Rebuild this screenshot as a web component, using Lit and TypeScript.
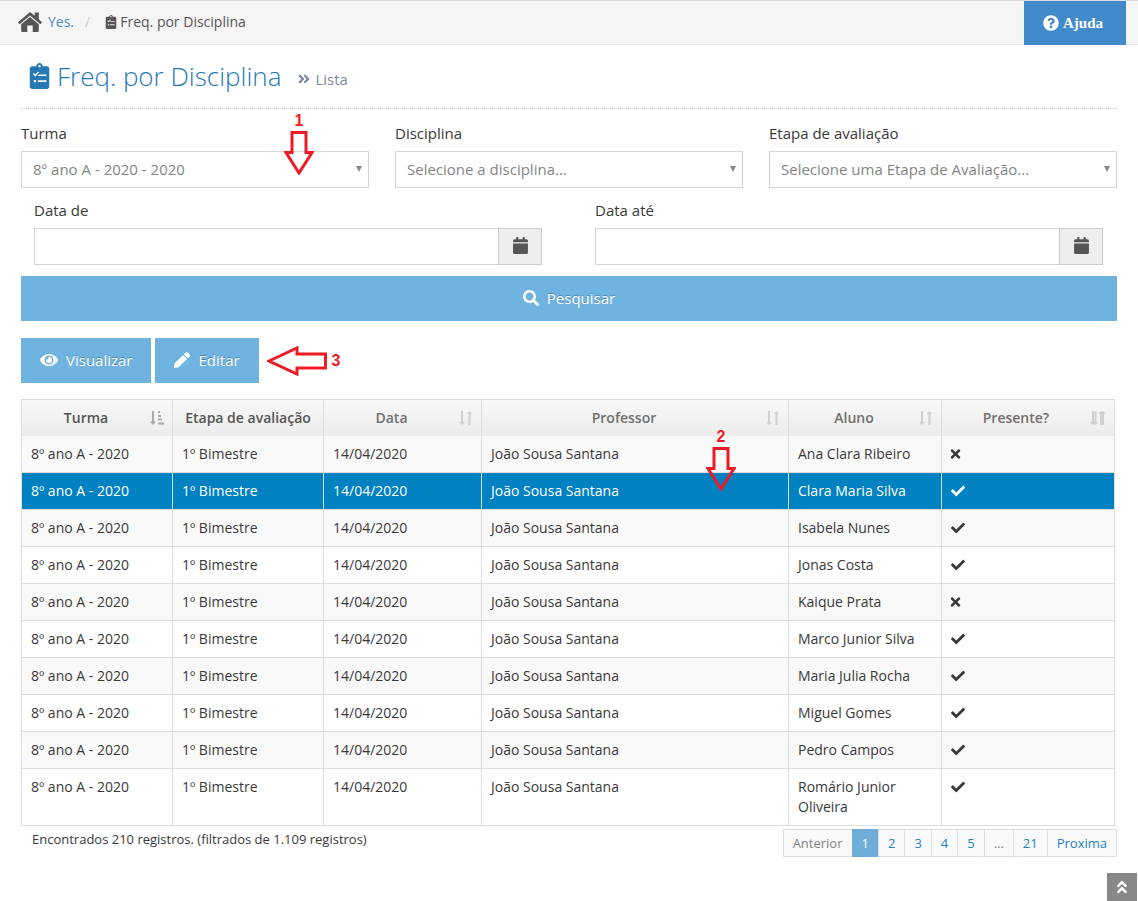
import { LitElement, html, svg, css } from "lit";
import { customElement, property, state } from "lit/decorators.js";
import { classMap } from "lit/directives/class-map.js";

type Glyph = { box: string; art: unknown };

const angles = svg`<path d="M224.3 273l-136 136c-9.4 9.4-24.6 9.4-33.9 0l-22.6-22.6c-9.4-9.4-9.4-24.6 0-33.9l96.4-96.4-96.4-96.4c-9.4-9.4-9.4-24.6 0-33.9L54.3 103c9.4-9.4 24.6-9.4 33.9 0l136 136c9.5 9.4 9.5 24.6.1 34zm192-34l-136-136c-9.4-9.4-24.6-9.4-33.9 0l-22.6 22.6c-9.4 9.4-9.4 24.6 0 33.9l96.4 96.4-96.4 96.4c-9.4 9.4-9.4 24.6 0 33.9l22.6 22.6c9.4 9.4 24.6 9.4 33.9 0l136-136c9.4-9.2 9.4-24.4 0-33.8z"/>`;

const glyphs: Record<string, Glyph> = {
  home: {
    box: "0 0 24 20",
    art: svg`<path d="M12 0 L16.6 3.800 V0.500 H20.800 V7.300 L24 10.300 L22.400 12.200 L12 3.600 L1.600 12.200 L0 10.300 Z"/><path d="M12 5 L20.800 12.300 V19 A1 1 0 0 1 19.800 20 H14.700 V13.500 H9.300 V20 H4.200 A1 1 0 0 1 3.200 19 V12.300 Z"/>`,
  },
  clipboard: {
    box: "0 0 384 512",
    art: svg`<path fill-rule="evenodd" d="M336 64h-80c0-35.300-28.700-64-64-64s-64 28.700-64 64H48C21.500 64 0 85.500 0 112v352c0 26.500 21.500 48 48 48h288c26.500 0 48-21.500 48-48V112c0-26.500-21.500-48-48-48zM192 40c13.300 0 24 10.700 24 24s-10.700 24-24 24-24-10.700-24-24 10.700-24 24-24zM60 218l22-22 26 26 56-56 20 22-76 76zM186 224h142v32H158zM80 336h44v44H80zM160 342h168v34H160z"/>`,
  },
  help: {
    box: "0 0 512 512",
    art: svg`<path d="M504 256c0 136.997-111.043 248-248 248S8 392.997 8 256C8 119.083 119.043 8 256 8s248 111.083 248 248zM262.655 90c-54.497 0-89.255 22.957-116.549 63.758-3.536 5.286-2.353 12.415 2.715 16.258l34.699 26.310c5.205 3.947 12.621 3.008 16.665-2.122 17.864-22.658 30.113-35.797 57.303-35.797 20.429 0 45.698 13.148 45.698 32.958 0 14.976-12.363 22.667-32.534 33.976C247.128 238.528 216 254.941 216 296v4c0 6.627 5.373 12 12 12h56c6.627 0 12-5.373 12-12v-1.333c0-28.462 83.186-29.647 83.186-106.667 0-58.002-60.165-102-116.531-102zM256 338c-25.365 0-46 20.635-46 46 0 25.364 20.635 46 46 46s46-20.636 46-46c0-25.365-20.635-46-46-46z"/>`,
  },
  right: { box: "0 0 448 512", art: angles },
  up: { box: "0 0 512 512", art: svg`<g transform="rotate(-90 256 256) translate(32 0)">${angles}</g>` },
  calendar: {
    box: "0 0 448 512",
    art: svg`<path d="M12 192h424c6.600 0 12 5.400 12 12v260c0 26.500-21.500 48-48 48H48c-26.500 0-48-21.500-48-48V204c0-6.600 5.400-12 12-12zm436-44v-36c0-26.500-21.500-48-48-48h-48V12c0-6.600-5.400-12-12-12h-40c-6.600 0-12 5.400-12 12v52H160V12c0-6.600-5.400-12-12-12h-40c-6.600 0-12 5.400-12 12v52H48C21.500 64 0 85.500 0 112v36c0 6.600 5.400 12 12 12h424c6.600 0 12-5.400 12-12z"/>`,
  },
  search: {
    box: "0 0 512 512",
    art: svg`<path d="M505 442.700L405.300 343c-4.500-4.500-10.600-7-17-7H372c27.600-35.300 44-79.700 44-128C416 93.100 322.900 0 208 0S0 93.100 0 208s93.100 208 208 208c48.300 0 92.700-16.400 128-44v16.300c0 6.400 2.500 12.500 7 17l99.700 99.700c9.400 9.400 24.600 9.400 33.900 0l28.300-28.300c9.400-9.400 9.400-24.600.1-34zM208 336c-70.700 0-128-57.200-128-128 0-70.700 57.200-128 128-128 70.700 0 128 57.200 128 128 0 70.700-57.200 128-128 128z"/>`,
  },
  eye: {
    box: "0 0 576 512",
    art: svg`<path d="M572.520 241.400C518.290 135.590 410.930 64 288 64S57.680 135.640 3.480 241.410a32.350 32.350 0 0 0 0 29.190C57.710 376.410 165.070 448 288 448s230.320-71.640 284.520-177.410a32.350 32.350 0 0 0 0-29.190zM288 400a144 144 0 1 1 144-144 143.930 143.930 0 0 1-144 144zm0-240a95.310 95.310 0 0 0-25.310 3.790 47.850 47.850 0 0 1-66.900 66.900A95.780 95.780 0 1 0 288 160z"/>`,
  },
  pencil: {
    box: "0 0 512 512",
    art: svg`<path d="M498 142l-47 47c-5 5-12 5-17 0L323 78c-5-5-5-12 0-17l47-47c19-19 49-19 68 0l60 60c19 19 19 49 0 68zM283 101L22 362 0 484c-3 17 12 31 28 28l122-21 261-262c5-5 5-12 0-17L300 101c-5-5-12-5-17 0z"/>`,
  },
  check: {
    box: "0 0 512 512",
    art: svg`<path d="M173.898 439.404l-166.400-166.400c-9.997-9.997-9.997-26.206 0-36.204l36.203-36.204c9.997-9.998 26.207-9.998 36.204 0L192 312.690 432.095 72.596c9.997-9.997 26.207-9.997 36.204 0l36.203 36.204c9.997 9.997 9.997 26.206 0 36.204l-294.400 294.401c-9.998 9.997-26.207 9.997-36.204-.001z"/>`,
  },
  times: {
    box: "0 0 352 512",
    art: svg`<path d="M242.720 256l100.070-100.070c12.280-12.280 12.280-32.190 0-44.480l-22.240-22.240c-12.280-12.280-32.190-12.280-44.480 0L176 189.280 75.930 89.210c-12.280-12.280-32.190-12.280-44.480 0L9.210 111.450c-12.280 12.280-12.280 32.190 0 44.480L109.280 256 9.210 356.070c-12.280 12.280-12.280 32.190 0 44.480l22.240 22.240c12.280 12.280 32.200 12.280 44.480 0L176 322.720l100.070 100.070c12.280 12.280 32.200 12.280 44.480 0l22.240-22.240c12.280-12.280 12.280-32.190 0-44.480L242.720 256z"/>`,
  },
  sortAsc: {
    box: "0 0 14 14",
    art: svg`<path d="M2 0h2v10.500h2L3 14 0 10.500h2zM8 0h2v2H8zM8 4h3v2H8zM8 7.500h4v2H8zM8 11.500h6v2H8z"/>`,
  },
  sortBoth: {
    box: "0 0 14 14",
    art: svg`<path d="M2 0h2v11h2L3 14 0 11h2zM9.500 14h2V3h2l-3-3-3 3h2z"/>`,
  },
  sortMulti: {
    box: "0 0 16 14",
    art: svg`<path d="M2 0h2v11h2L3 14 0 11h2zM10 14h2V3h2l-3-3-3 3h2z"/><path d="M4.500 0h2v11h2l-3 3-3-3h2zM12 14h2V3h2l-3-3-3 3h2z"/>`,
  },
  arrowDown: {
    box: "0 0 30 44",
    art: svg`<path class="line" d="M8 1.500h14v20h6L15 42 2 21.500h6z"/>`,
  },
  arrowLeft: {
    box: "0 0 60 30",
    art: svg`<path class="line" d="M2 15L30 2v6h28.500v14H30v6z"/>`,
  },
};

@customElement("ui-icon")
class UiIcon extends LitElement {
  @property() name = "check";

  static styles = css`
    :host {
      display: inline-block;
      flex: none;
    }
    .glyph {
      display: block;
      width: 100%;
      height: 100%;
      fill: currentColor;
    }
    .line {
      fill: none;
      stroke: currentColor;
      stroke-width: 3;
    }
  `;

  render() {
    const g = glyphs[this.name];
    return html`<svg class="glyph" viewBox=${g.box} aria-hidden="true">${g.art}</svg>`;
  }
}

interface Row {
  student: string;
  present: boolean;
}

const rows: Row[] = [
  { student: "Ana Clara Ribeiro", present: false },
  { student: "Clara Maria Silva", present: true },
  { student: "Isabela Nunes", present: true },
  { student: "Jonas Costa", present: true },
  { student: "Kaique Prata", present: false },
  { student: "Marco Junior Silva", present: true },
  { student: "Maria Julia Rocha", present: true },
  { student: "Miguel Gomes", present: true },
  { student: "Pedro Campos", present: true },
  { student: "Romário Junior Oliveira", present: true },
];

const columns = [
  { label: "Turma", icon: "sortAsc", size: "c-class" },
  { label: "Etapa de avaliação", icon: "", size: "c-stage" },
  { label: "Data", icon: "sortBoth", size: "c-date" },
  { label: "Professor", icon: "sortBoth", size: "c-teacher" },
  { label: "Aluno", icon: "sortBoth", size: "c-student" },
  { label: "Presente?", icon: "sortMulti", size: "c-present" },
];

const filters = [
  { id: "turma", label: "Turma", value: "8º ano A - 2020 - 2020" },
  { id: "disciplina", label: "Disciplina", value: "Selecione a disciplina..." },
  { id: "etapa", label: "Etapa de avaliação", value: "Selecione uma Etapa de Avaliação..." },
];

const dates = [
  { id: "data-de", label: "Data de" },
  { id: "data-ate", label: "Data até" },
];

const pages = ["Anterior", "1", "2", "3", "4", "5", "…", "21", "Proxima"];

@customElement("app-root")
class AppRoot extends LitElement {
  @state() selected = 1;

  static styles = css`
    :host {
      display: block;
      position: relative;
      min-height: 100vh;
      background: #fff;
      color: #393939;
      font: 14px/20px "Open Sans", sans-serif;
    }
    *,
    *::before {
      box-sizing: border-box;
    }
    a {
      color: inherit;
      text-decoration: none;
    }
    button,
    input,
    select {
      margin: 0;
      font: inherit;
      color: inherit;
      border-radius: 0;
    }
    button {
      padding: 0;
      border: 0;
      background: none;
      cursor: pointer;
    }
    .topbar {
      display: flex;
      align-items: center;
      height: 45px;
      padding: 0 12px 0 18px;
      background: #f5f5f5;
      border-top: 1px solid #dcdce0;
      box-shadow: inset 0 -1px #e5e5e5;
      color: #555;
    }
    .crumbs {
      display: flex;
      align-items: center;
      flex: 1;
      padding-bottom: 2px;
    }
    .home {
      display: flex;
      align-items: center;
      gap: 6px;
      color: #4c8fbd;
    }
    .home-icon {
      width: 24px;
      height: 20px;
      color: #555;
    }
    .slash {
      padding: 0 15px 0 11px;
      color: #ccc;
    }
    .crumb {
      display: flex;
      align-items: center;
      gap: 3px;
    }
    .crumb-icon {
      width: 12px;
      height: 14px;
    }
    .help {
      display: flex;
      align-items: center;
      justify-content: center;
      align-self: stretch;
      gap: 4px;
      width: 102px;
      padding-right: 4px;
      background: #428bca;
      color: #fff;
      font: bold 15px/20px "Liberation Serif", serif;
    }
    .help-icon {
      width: 16px;
      height: 16px;
    }
    .content {
      padding: 0 21px;
    }
    .heading {
      display: flex;
      align-items: baseline;
      height: 64px;
      padding: 13px 8px 0;
      margin: 0 0 14px;
      border-bottom: 1px dotted #ccc;
      color: #2679b5;
      font-size: 26px;
      line-height: 36px;
      font-weight: 300;
    }
    .heading-icon {
      align-self: flex-start;
      width: 21px;
      height: 26px;
      margin: 5px 7px 0 0;
    }
    .sub {
      display: flex;
      align-items: center;
      gap: 4px;
      margin-left: 16px;
      color: #8089a0;
      font-size: 15px;
      line-height: 20px;
      font-weight: 400;
    }
    .sub-icon {
      width: 14px;
      height: 14px;
    }
    .filters {
      display: grid;
      grid-template-columns: repeat(3, 1fr);
      gap: 26px;
      font-size: 15px;
    }
    .field {
      position: relative;
    }
    .field-label {
      display: block;
      margin-bottom: 8px;
      font-size: 15px;
      line-height: 20px;
    }
    .select-box {
      position: relative;
    }
    .select-box::after {
      content: "";
      position: absolute;
      right: 7px;
      top: 15px;
      border: 3px solid transparent;
      border-top: 6px solid #888;
      border-bottom: 0;
      pointer-events: none;
    }
    .select {
      display: block;
      appearance: none;
      width: 100%;
      height: 37px;
      padding: 0 24px 2px 11px;
      border: 1px solid #d5d5d5;
      background: #fff;
      color: #858585;
      font-size: 15px;
    }
    .dates {
      display: grid;
      grid-template-columns: repeat(2, 1fr);
      gap: 53px;
      padding: 12px 14px 11px 13px;
    }
    .date-box {
      display: flex;
      height: 37px;
    }
    .date-input {
      flex: 1;
      min-width: 0;
      padding: 0 8px;
      border: 1px solid #d5d5d5;
      border-right: 0;
      background: #fff;
    }
    .date-button {
      display: flex;
      align-items: center;
      justify-content: center;
      width: 44px;
      padding-bottom: 2px;
      border: 1px solid #ccc;
      background: #eee;
      color: #555;
    }
    .date-icon {
      width: 15px;
      height: 17px;
    }
    .action {
      display: flex;
      align-items: center;
      justify-content: center;
      gap: 8px;
      height: 45px;
      padding: 0 19px 2px;
      background: #6fb3e0;
      color: #fff;
      font-size: 15px;
      text-shadow: 0 -1px rgba(0, 0, 0, 0.25);
    }
    .wide {
      width: 100%;
    }
    .action-icon {
      width: 16px;
      height: 16px;
    }
    .eye-icon {
      width: 18px;
      height: 16px;
    }
    .actions {
      display: flex;
      gap: 4px;
      margin: 17px 0 16px;
    }
    .mark {
      color: #ed1c24;
      font: bold 16px/16px "Liberation Sans", sans-serif;
    }
    .mark-down {
      position: absolute;
      display: flex;
      flex-direction: column;
      align-items: center;
      gap: 2px;
      pointer-events: none;
    }
    .mark-filter {
      right: 55px;
      top: -10px;
    }
    .mark-row {
      left: 62.5%;
      top: 30px;
    }
    .mark-side {
      display: flex;
      align-items: center;
      gap: 5px;
      padding-left: 4px;
    }
    .down-icon {
      width: 30px;
      height: 44px;
    }
    .left-icon {
      width: 60px;
      height: 30px;
    }
    .table-box {
      position: relative;
      padding-right: 2px;
    }
    .grid {
      width: 100%;
      table-layout: fixed;
      border-collapse: separate;
      border-spacing: 0;
      border: solid #ddd;
      border-width: 1px 0 0 1px;
    }
    .c-class,
    .c-stage {
      width: 151px;
    }
    .c-date {
      width: 158px;
    }
    .c-student {
      width: 153px;
    }
    .c-present {
      width: 173px;
    }
    .head {
      padding: 8px;
      border-right: 1px solid #ddd;
      background: linear-gradient(#f8f8f8, #ececec);
      color: #707070;
      font-weight: 600;
      white-space: nowrap;
    }
    .head.strong {
      color: #555;
    }
    .sorter {
      display: flex;
      align-items: center;
      width: 100%;
      gap: 8px;
    }
    .sorter-text {
      flex: 1;
    }
    .sort-icon {
      width: 14px;
      height: 14px;
      color: #d0d0d0;
    }
    .sort-icon.double {
      width: 16px;
    }
    .strong .sort-icon {
      color: #aaa;
    }
    .cell {
      padding: 8px 8px 8px 9px;
      border: solid #ddd;
      border-width: 0 1px 1px 0;
      vertical-align: top;
    }
    .cell.mid {
      padding-left: 8px;
    }
    .row:nth-child(odd) {
      background: #f9f9f9;
    }
    .row.selected {
      background: #0081c2;
      color: #fff;
    }
    .state {
      display: block;
      height: 14px;
      margin: 3px 0;
    }
    .state.yes {
      width: 16px;
    }
    .state.no {
      width: 11px;
    }
    .foot {
      display: flex;
      justify-content: space-between;
      align-items: flex-start;
      padding: 3px 0 0 11px;
      font-size: 13px;
    }
    .pager {
      display: flex;
      margin: 0;
      padding: 0;
      list-style: none;
    }
    .page {
      display: block;
      height: 28px;
      padding: 0 9px;
      margin-left: -1px;
      border: 1px solid #d9e1e6;
      background: #fafafa;
      color: #2283c5;
      line-height: 26px;
    }
    .page.muted {
      border-color: #ddd;
      color: #808080;
    }
    .page.current {
      border-color: #6faed9;
      background: #6faed9;
      color: #fff;
    }
    .to-top {
      position: absolute;
      right: 1px;
      bottom: 0;
      display: flex;
      align-items: center;
      justify-content: center;
      width: 30px;
      height: 28px;
      background: #888;
      color: #fff;
    }
    .top-icon {
      width: 16px;
      height: 16px;
    }
  `;

  render() {
    return html`
      <nav class="topbar">
        <div class="crumbs">
          <a class="home" href="#"><ui-icon class="home-icon" name="home"></ui-icon>Yes.</a>
          <span class="slash">/</span>
          <span class="crumb"><ui-icon class="crumb-icon" name="clipboard"></ui-icon>Freq. por Disciplina</span>
        </div>
        <a class="help" href="#"><ui-icon class="help-icon" name="help"></ui-icon>Ajuda</a>
      </nav>
      <main class="content">
        <h1 class="heading">
          <ui-icon class="heading-icon" name="clipboard"></ui-icon>Freq. por Disciplina
          <small class="sub"><ui-icon class="sub-icon" name="right"></ui-icon>Lista</small>
        </h1>
        <div class="filters">
          ${filters.map(
            (f, i) => html`<div class="field">
              <label class="field-label" for=${f.id}>${f.label}</label>
              <div class="select-box">
                <select class="select" id=${f.id}><option>${f.value}</option></select>
              </div>
              ${i === 0
                ? html`<div class="mark mark-down mark-filter">1<ui-icon class="down-icon" name="arrowDown"></ui-icon></div>`
                : ""}
            </div>`
          )}
        </div>
        <div class="dates">
          ${dates.map(
            (d) => html`<div class="field">
              <label class="field-label" for=${d.id}>${d.label}</label>
              <div class="date-box">
                <input class="date-input" id=${d.id} type="text" />
                <button class="date-button" type="button" aria-label=${d.label}>
                  <ui-icon class="date-icon" name="calendar"></ui-icon>
                </button>
              </div>
            </div>`
          )}
        </div>
        <button class="action wide" type="button">
          <ui-icon class="action-icon" name="search"></ui-icon>Pesquisar
        </button>
        <div class="actions">
          <button class="action" type="button"><ui-icon class="eye-icon" name="eye"></ui-icon>Visualizar</button>
          <button class="action" type="button"><ui-icon class="action-icon" name="pencil"></ui-icon>Editar</button>
          <div class="mark mark-side"><ui-icon class="left-icon" name="arrowLeft"></ui-icon>3</div>
        </div>
        <div class="table-box">
          <table class="grid">
            <colgroup>
              ${columns.map((c) => html`<col class=${c.size} />`)}
            </colgroup>
            <thead>
              <tr>
                ${columns.map(
                  (c, i) => html`<th class=${classMap({ head: true, strong: i < 2 })} scope="col">
                    ${c.icon
                      ? html`<button class="sorter" type="button">
                          <span class="sorter-text">${c.label}</span>
                          <ui-icon
                            class=${classMap({ "sort-icon": true, double: c.icon === "sortMulti" })}
                            name=${c.icon}
                          ></ui-icon>
                        </button>`
                      : c.label}
                  </th>`
                )}
              </tr>
            </thead>
            <tbody>
              ${rows.map(
                (r, i) => html`<tr
                  class=${classMap({ row: true, selected: i === this.selected })}
                  @click=${() => (this.selected = i)}
                >
                  <td class="cell">8º ano A - 2020</td>
                  <td class="cell">1º Bimestre</td>
                  <td class="cell">14/04/2020</td>
                  <td class="cell">João Sousa Santana</td>
                  <td class="cell">${r.student}</td>
                  <td class="cell mid">
                    <ui-icon
                      class=${classMap({ state: true, yes: r.present, no: !r.present })}
                      name=${r.present ? "check" : "times"}
                    ></ui-icon>
                  </td>
                </tr>`
              )}
            </tbody>
          </table>
          <div class="mark mark-down mark-row">2<ui-icon class="down-icon" name="arrowDown"></ui-icon></div>
        </div>
        <div class="foot">
          <span>Encontrados 210 registros. (filtrados de 1.109 registros)</span>
          <ul class="pager">
            ${pages.map(
              (p) => html`<li>
                <a
                  class=${classMap({ page: true, current: p === "1", muted: p === "Anterior" || p === "…" })}
                  href="#"
                  >${p}</a
                >
              </li>`
            )}
          </ul>
        </div>
      </main>
      <a class="to-top" href="#" aria-label="Topo"><ui-icon class="top-icon" name="up"></ui-icon></a>
    `;
  }
}
